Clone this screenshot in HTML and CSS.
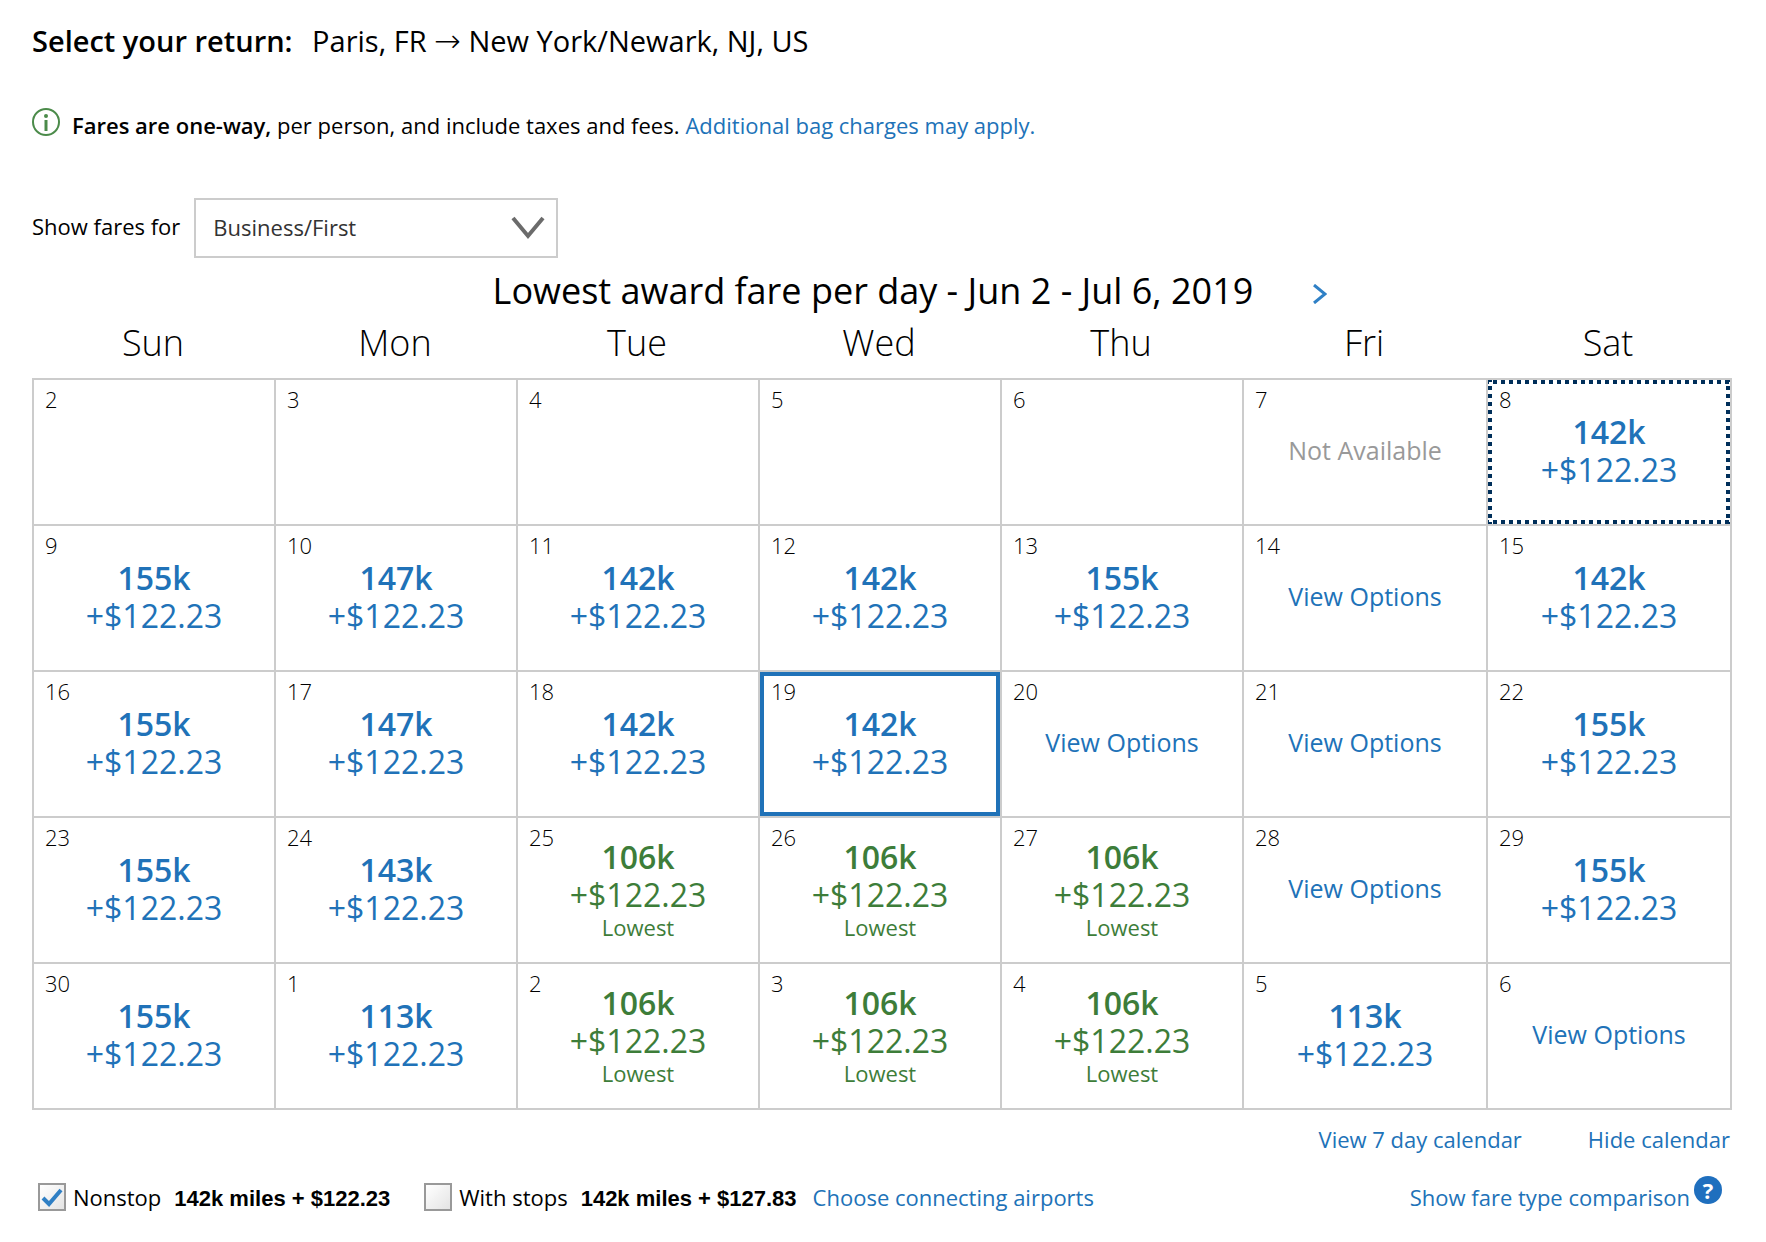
FILE: index.html
```html
<!DOCTYPE html>
<html lang="en">
<head>
    <meta charset="UTF-8">
    <meta name="viewport" content="width=device-width, initial-scale=1.0">
    <title>Select your return</title>
    <link rel="stylesheet" href="styles.css">
</head>
<body>
    <main class="page">
        <h1 class="trip"><strong>Select your return:</strong> <span class="route">Paris, FR <span class="arrow">→</span> New York/Newark, NJ, US</span></h1>

        <div class="notice">
            <svg class="info-icon" viewBox="0 0 28 28" aria-hidden="true">
                <circle cx="14" cy="14" r="13"/>
                <path d="M14 12v11"/>
                <circle class="dot" cx="14" cy="8" r="2"/>
            </svg>
            <p><strong>Fares are one-way,</strong> per person, and include taxes and fees.</p>
            <a href="#">Additional bag charges may apply.</a>
        </div>

        <div class="fare-filter">
            <label for="cabin">Show fares for</label>
            <div class="select-wrap">
                <select id="cabin">
                    <option>Business/First</option>
                </select>
                <svg class="select-arrow" viewBox="0 0 34 24" aria-hidden="true"><path d="M2 2l15 18L32 2"/></svg>
            </div>
        </div>

        <!-- Calendar -->
        <div class="calendar-title">
            <h2>Lowest award fare per day - Jun 2 - Jul 6, 2019</h2>
            <button class="next-btn" type="button" aria-label="Next">
                <svg viewBox="0 0 14 20" aria-hidden="true"><path d="M1 1l11 9L1 19"/></svg>
            </button>
        </div>

        <table class="calendar">
            <thead>
                <tr><th>Sun</th><th>Mon</th><th>Tue</th><th>Wed</th><th>Thu</th><th class="wide">Fri</th><th class="wide">Sat</th></tr>
            </thead>
            <tbody>
                <tr>
                    <td><div class="day"><span class="date">2</span></div></td>
                    <td><div class="day"><span class="date">3</span></div></td>
                    <td><div class="day"><span class="date">4</span></div></td>
                    <td><div class="day"><span class="date">5</span></div></td>
                    <td><div class="day"><span class="date">6</span></div></td>
                    <td><div class="day"><span class="date">7</span><span class="options unavailable">Not Available</span></div></td>
                    <td><div class="day departing"><span class="date">8</span><a class="fare" href="#"><b>142k</b><span>+$122.23</span></a></div></td>
                </tr>
                <tr>
                    <td><div class="day"><span class="date">9</span><a class="fare" href="#"><b>155k</b><span>+$122.23</span></a></div></td>
                    <td><div class="day"><span class="date">10</span><a class="fare" href="#"><b>147k</b><span>+$122.23</span></a></div></td>
                    <td><div class="day"><span class="date">11</span><a class="fare" href="#"><b>142k</b><span>+$122.23</span></a></div></td>
                    <td><div class="day"><span class="date">12</span><a class="fare" href="#"><b>142k</b><span>+$122.23</span></a></div></td>
                    <td><div class="day"><span class="date">13</span><a class="fare" href="#"><b>155k</b><span>+$122.23</span></a></div></td>
                    <td><div class="day"><span class="date">14</span><a class="options" href="#">View Options</a></div></td>
                    <td><div class="day"><span class="date">15</span><a class="fare" href="#"><b>142k</b><span>+$122.23</span></a></div></td>
                </tr>
                <tr>
                    <td><div class="day"><span class="date">16</span><a class="fare" href="#"><b>155k</b><span>+$122.23</span></a></div></td>
                    <td><div class="day"><span class="date">17</span><a class="fare" href="#"><b>147k</b><span>+$122.23</span></a></div></td>
                    <td><div class="day"><span class="date">18</span><a class="fare" href="#"><b>142k</b><span>+$122.23</span></a></div></td>
                    <td><div class="day selected"><span class="date">19</span><a class="fare" href="#"><b>142k</b><span>+$122.23</span></a></div></td>
                    <td><div class="day"><span class="date">20</span><a class="options" href="#">View Options</a></div></td>
                    <td><div class="day"><span class="date">21</span><a class="options" href="#">View Options</a></div></td>
                    <td><div class="day"><span class="date">22</span><a class="fare" href="#"><b>155k</b><span>+$122.23</span></a></div></td>
                </tr>
                <tr>
                    <td><div class="day"><span class="date">23</span><a class="fare" href="#"><b>155k</b><span>+$122.23</span></a></div></td>
                    <td><div class="day"><span class="date">24</span><a class="fare" href="#"><b>143k</b><span>+$122.23</span></a></div></td>
                    <td><div class="day"><span class="date">25</span><a class="fare lowest" href="#"><b>106k</b><span>+$122.23</span><small>Lowest</small></a></div></td>
                    <td><div class="day"><span class="date">26</span><a class="fare lowest" href="#"><b>106k</b><span>+$122.23</span><small>Lowest</small></a></div></td>
                    <td><div class="day"><span class="date">27</span><a class="fare lowest" href="#"><b>106k</b><span>+$122.23</span><small>Lowest</small></a></div></td>
                    <td><div class="day"><span class="date">28</span><a class="options" href="#">View Options</a></div></td>
                    <td><div class="day"><span class="date">29</span><a class="fare" href="#"><b>155k</b><span>+$122.23</span></a></div></td>
                </tr>
                <tr>
                    <td><div class="day"><span class="date">30</span><a class="fare" href="#"><b>155k</b><span>+$122.23</span></a></div></td>
                    <td><div class="day"><span class="date">1</span><a class="fare" href="#"><b>113k</b><span>+$122.23</span></a></div></td>
                    <td><div class="day"><span class="date">2</span><a class="fare lowest" href="#"><b>106k</b><span>+$122.23</span><small>Lowest</small></a></div></td>
                    <td><div class="day"><span class="date">3</span><a class="fare lowest" href="#"><b>106k</b><span>+$122.23</span><small>Lowest</small></a></div></td>
                    <td><div class="day"><span class="date">4</span><a class="fare lowest" href="#"><b>106k</b><span>+$122.23</span><small>Lowest</small></a></div></td>
                    <td><div class="day"><span class="date">5</span><a class="fare" href="#"><b>113k</b><span>+$122.23</span></a></div></td>
                    <td><div class="day"><span class="date">6</span><a class="options" href="#">View Options</a></div></td>
                </tr>
            </tbody>
        </table>

        <div class="calendar-links">
            <a href="#">View 7 day calendar</a>
            <a href="#">Hide calendar</a>
        </div>

        <!-- Stops filter -->
        <div class="stops">
            <div class="stop-option">
                <span class="check">
                    <input type="checkbox" id="nonstop" checked>
                    <svg viewBox="0 0 28 28" aria-hidden="true"><path d="M5 15l6 6L23 7"/></svg>
                </span>
                <label for="nonstop">Nonstop</label>
                <span class="miles">142k miles + $122.23</span>
            </div>
            <div class="stop-option">
                <span class="check">
                    <input type="checkbox" id="withstops">
                    <svg viewBox="0 0 28 28" aria-hidden="true"><path d="M5 15l6 6L23 7"/></svg>
                </span>
                <label for="withstops">With stops</label>
                <span class="miles">142k miles + $127.83</span>
            </div>
            <a href="#">Choose connecting airports</a>
            <div class="compare">
                <a href="#">Show fare type comparison</a>
                <button class="help-btn" type="button" aria-label="Help">?</button>
            </div>
        </div>
    </main>
</body>
</html>
```

FILE: styles.css
```css
:root {
    --link: #2072b8;
    --lowest: #3d7d39;
    --line: #cccccc;
    --navy: #002f5a;
}

* {
    margin: 0;
    padding: 0;
    box-sizing: border-box;
}

body {
    background: #ffffff;
    color: #000000;
    font-family: "Open Sans", "Noto Sans", sans-serif;
    font-size: 22px;
    line-height: 30px;
}

a {
    color: var(--link);
    text-decoration: none;
}

a:hover {
    text-decoration: underline;
}

strong {
    font-weight: 600;
}

svg {
    display: block;
    fill: none;
}

button {
    border: none;
    background: none;
    cursor: pointer;
}

.page {
    padding: 21px 34px 20px 32px;
}

.trip {
    font-size: 29px;
    font-weight: 400;
    line-height: 40px;
}

.route {
    margin-left: 12px;
}

.arrow {
    font-family: "DejaVu Sans", sans-serif;
    font-size: 32px;
    font-weight: 200;
    line-height: 30px;
}

/* Notice */
.notice {
    display: flex;
    align-items: flex-end;
    margin-top: 47px;
}

.notice p {
    margin: 0 6px 0 12px;
}

.info-icon {
    width: 28px;
    height: 28px;
    margin-bottom: 4px;
    stroke: #4b8b4a;
    stroke-width: 2;
}

.info-icon path {
    stroke-width: 3;
}

.info-icon .dot {
    fill: #4b8b4a;
    stroke: none;
}

/* Cabin drop-down */
.fare-filter {
    display: flex;
    align-items: center;
    gap: 14px;
    margin-top: 58px;
}

.fare-filter label {
    padding-bottom: 4px;
}

.select-wrap {
    position: relative;
    width: 364px;
}

.select-wrap select {
    width: 100%;
    height: 60px;
    padding: 0 60px 2px 17px;
    appearance: none;
    background: #ffffff;
    border: 2px solid var(--line);
    border-radius: 0;
    color: #333333;
    font: inherit;
}

.select-arrow {
    position: absolute;
    top: 18px;
    right: 13px;
    width: 34px;
    height: 24px;
    stroke: #6b6b6b;
    stroke-width: 4;
    pointer-events: none;
}

/* Calendar */
.calendar-title {
    display: flex;
    align-items: center;
    justify-content: center;
    gap: 60px;
    padding-left: 56px;
    margin-top: 7px;
}

.calendar-title h2 {
    font-size: 36px;
    font-weight: 400;
    line-height: 52px;
}

.next-btn {
    padding-top: 6px;
}

.next-btn svg {
    width: 14px;
    height: 20px;
    stroke: #2f80c6;
    stroke-width: 3;
}

.calendar {
    width: 100%;
    table-layout: fixed;
    border-collapse: collapse;
}

.calendar th {
    padding-right: 2px;
    padding-bottom: 9px;
    font-size: 36px;
    font-weight: 300;
    line-height: 52px;
}

.calendar .wide {
    width: 244px;
}

.calendar td {
    border: 2px solid var(--line);
}

.day {
    display: grid;
    height: 144px;
}

.date,
.fare,
.options {
    grid-area: 1 / 1;
}

.date {
    align-self: start;
    justify-self: start;
    padding: 4px 11px;
    font-weight: 300;
}

.fare,
.options {
    place-self: center;
    text-align: center;
}

.fare {
    padding-bottom: 2px;
    font-size: 32px;
    line-height: 38px;
}

.fare b,
.fare span,
.fare small {
    display: block;
}

.fare b {
    font-weight: 600;
}

.fare small {
    font-size: 22px;
    line-height: 26px;
}

.options {
    padding-bottom: 4px;
    font-size: 25px;
    line-height: 38px;
}

.unavailable {
    color: #999999;
}

.lowest {
    color: var(--lowest);
}

.selected {
    box-shadow: inset 0 0 0 4px var(--link);
}

/* square dots on all four edges */
.departing {
    background:
        linear-gradient(90deg, var(--navy) 50%, transparent 50%) center top / 8px 4px repeat-x,
        linear-gradient(90deg, var(--navy) 50%, transparent 50%) center bottom / 8px 4px repeat-x,
        linear-gradient(var(--navy) 50%, transparent 50%) left 6px / 4px 8px repeat-y,
        linear-gradient(var(--navy) 50%, transparent 50%) right 6px / 4px 8px repeat-y;
}

.calendar-links {
    display: flex;
    justify-content: flex-end;
    gap: 66px;
    padding-right: 2px;
    margin-top: 14px;
}

/* Stops filter */
.stops {
    display: flex;
    align-items: center;
    margin-top: 26px;
    padding: 0 10px 0 6px;
}

.stop-option {
    display: flex;
    align-items: center;
    margin-right: 34px;
}

.stop-option + .stop-option {
    margin-right: 16px;
}

.check {
    display: grid;
    margin-right: 7px;
}

.check input,
.check svg {
    grid-area: 1 / 1;
    width: 28px;
    height: 28px;
}

.check input {
    appearance: none;
    border: 2px solid #999999;
    background: linear-gradient(135deg, #ffffff, #e4e4e4);
}

.check svg {
    display: none;
    stroke: #2f7fc4;
    stroke-width: 4;
    pointer-events: none;
}

.check input:checked + svg {
    display: block;
}

.miles {
    margin-left: 13px;
    padding-top: 4px;
    font-family: "Liberation Sans", Arial, sans-serif;
    font-weight: 700;
}

.compare {
    display: flex;
    gap: 4px;
    margin-left: auto;
}

.help-btn {
    width: 28px;
    height: 28px;
    margin-top: -6px;
    border-radius: 50%;
    background: #1f6fbe;
    color: #ffffff;
    font-family: "Open Sans", sans-serif;
    font-size: 22px;
    font-weight: 700;
    line-height: 28px;
}
```
